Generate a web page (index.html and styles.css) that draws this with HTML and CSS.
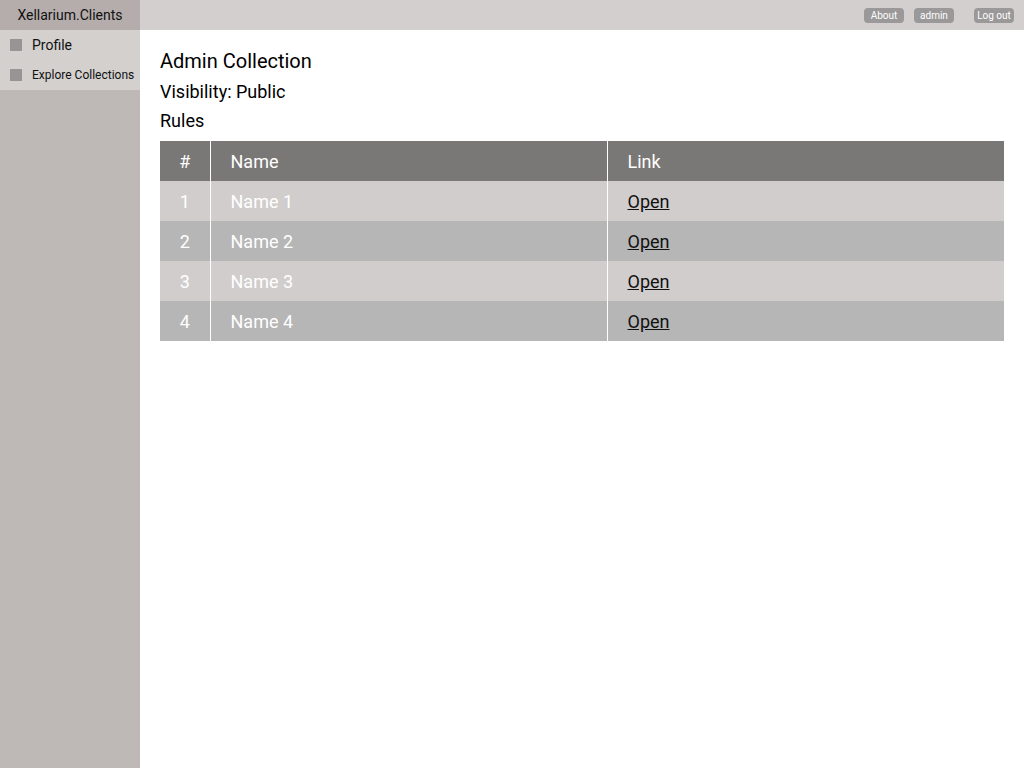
FILE: index.html
```html
<!DOCTYPE html>
<html>
<head>
<meta charset="utf-8">
<link rel="stylesheet" href="styles.css">
</head>
<body>
<div class="app">
  <aside class="sidebar">
    <div class="brand">Xellarium.Clients</div>
    <nav class="menu">
      <div class="menu-item"><span class="sq"></span><span class="lbl">Profile</span></div>
      <div class="menu-item small"><span class="sq"></span><span class="lbl">Explore Collections</span></div>
    </nav>
  </aside>
  <div class="main">
    <header class="topbar">
      <span class="btn">About</span>
      <span class="btn">admin</span>
      <span class="btn gap">Log out</span>
    </header>
    <section class="content">
      <h1 class="title">Admin Collection</h1>
      <div class="line">Visibility: Public</div>
      <div class="line">Rules</div>
      <table class="rules">
        <thead>
          <tr><th class="c-num">#</th><th class="c-name">Name</th><th class="c-link">Link</th></tr>
        </thead>
        <tbody>
          <tr class="odd"><td class="c-num">1</td><td class="c-name">Name 1</td><td class="c-link"><a href="#">Open</a></td></tr>
          <tr class="even"><td class="c-num">2</td><td class="c-name">Name 2</td><td class="c-link"><a href="#">Open</a></td></tr>
          <tr class="odd"><td class="c-num">3</td><td class="c-name">Name 3</td><td class="c-link"><a href="#">Open</a></td></tr>
          <tr class="even"><td class="c-num">4</td><td class="c-name">Name 4</td><td class="c-link"><a href="#">Open</a></td></tr>
        </tbody>
      </table>
    </section>
  </div>
</div>
</body>
</html>
```
FILE: styles.css
```css
* { box-sizing: border-box; }
html, body { margin: 0; padding: 0; height: 100%; }
body { font-family: Roboto, "Liberation Sans", sans-serif; color: #000; background: #fff; }
.app { display: flex; height: 768px; }
.sidebar { width: 140px; flex: none; background: #beb8b7; display: flex; flex-direction: column; }
.brand { height: 30px; background: #b5adac; font-size: 14px; line-height: 30px; text-align: center; color: #111; }
.menu { background: #d3d0ce; padding: 0; }
.menu-item { height: 30px; display: flex; align-items: center; padding-left: 10px; font-size: 14px; color: #111; }
.menu-item.small { font-size: 12px; }
.sq { width: 12px; height: 12px; background: #989494; margin-right: 10px; flex: none; }
.main { flex: 1; display: flex; flex-direction: column; }
.topbar { height: 30px; background: #d3cfcf; display: flex; justify-content: flex-end; align-items: center; padding-right: 10px; gap: 10px; }
.btn { font-size: 10px; color: #fff; background: #9a9898; border-radius: 4px; width: 40px; height: 15px; line-height: 15px; text-align: center; }
.btn.gap { margin-left: 10px; }
.content { padding: 18px 20px 0 20px; }
.title { font-size: 20px; font-weight: 400; margin: 0 0 4px 0; line-height: 26px; }
.line { font-size: 18px; line-height: 28px; margin-bottom: 1px; }
.rules { width: 100%; border-collapse: collapse; margin-top: 6px; font-size: 18px; }
.rules th, .rules td { height: 40px; padding: 0 0 0 20px; text-align: left; font-weight: 400; color: #fff; }
.rules .c-num { width: 50px; padding-left: 0; text-align: center; border-right: 1px solid #fff; }
.rules .c-name { width: 397px; border-right: 1px solid #fff; }
.rules thead tr { background: #7a7876; }
.rules tr.odd { background: #d1cdcd; }
.rules tr.even { background: #b6b6b6; }
.rules a { color: #111; text-decoration: underline; }
```
